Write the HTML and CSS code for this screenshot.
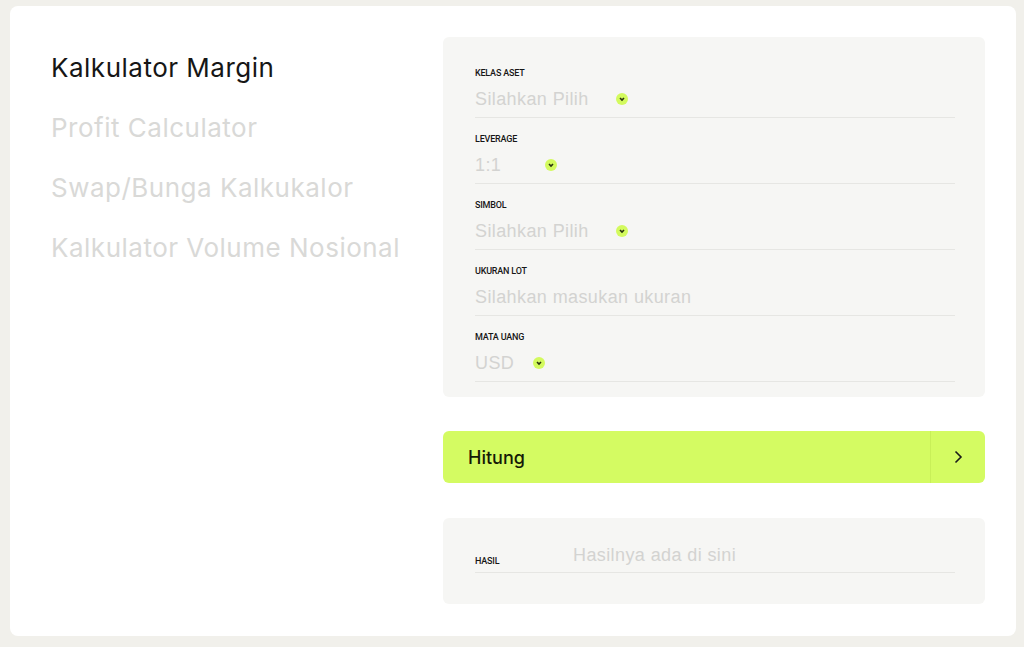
FILE: index.html
```html
<!DOCTYPE html>
<html lang="id">

<head>
    <meta charset="UTF-8">
    <meta name="viewport" content="width=device-width, initial-scale=1.0">
    <title>Kalkulator Margin</title>
    <link rel="stylesheet" href="styles.css">
</head>

<body>

    <div class="card">
        <ul class="calc-nav">
            <li class="active">Kalkulator Margin</li>
            <li>Profit Calculator</li>
            <li>Swap/Bunga Kalkukalor</li>
            <li>Kalkulator Volume Nosional</li>
        </ul>

        <div class="calc-main">
            <div class="form-box">
                <div class="field">
                    <div class="label">KELAS ASET</div>
                    <div class="value select">
                        <span class="val w-aset">Silahkan Pilih</span>
                        <span class="dot"><svg viewBox="0 0 12 12"><path d="M4 5l2 2 2-2" /></svg></span>
                    </div>
                </div>
                <div class="field">
                    <div class="label">LEVERAGE</div>
                    <div class="value select">
                        <span class="val w-lev">1:1</span>
                        <span class="dot"><svg viewBox="0 0 12 12"><path d="M4 5l2 2 2-2" /></svg></span>
                    </div>
                </div>
                <div class="field">
                    <div class="label">SIMBOL</div>
                    <div class="value select">
                        <span class="val w-aset">Silahkan Pilih</span>
                        <span class="dot"><svg viewBox="0 0 12 12"><path d="M4 5l2 2 2-2" /></svg></span>
                    </div>
                </div>
                <div class="field">
                    <div class="label">UKURAN LOT</div>
                    <div class="value">
                        <span class="val">Silahkan masukan ukuran</span>
                    </div>
                </div>
                <div class="field">
                    <div class="label">MATA UANG</div>
                    <div class="value select">
                        <span class="val w-cur">USD</span>
                        <span class="dot"><svg viewBox="0 0 12 12"><path d="M4 5l2 2 2-2" /></svg></span>
                    </div>
                </div>
            </div>

            <button class="btn-calc">
                <span class="btn-text">Hitung</span>
                <span class="btn-arrow"><svg viewBox="0 0 16 16"><path d="M5.5 2.5l5.5 5.5-5.5 5.5" /></svg></span>
            </button>

            <div class="result-box">
                <div class="result-row">
                    <div class="label">HASIL</div>
                    <div class="val">Hasilnya ada di sini</div>
                </div>
            </div>
        </div>
    </div>

</body>

</html>
```

FILE: styles.css
```css
* {
    margin: 0;
    padding: 0;
    list-style: none;
    box-sizing: border-box;
}

body {
    background: #f1f0eb;
    font-family: Inter, "Liberation Sans", sans-serif;
}

.card {
    margin: 6px 8px 0 10px;
    height: 630px;
    background: #fff;
    border-radius: 8px;
    padding: 31px 31px 32px 41px;
    display: flex;
}

.calc-nav {
    width: 392px;
    flex-shrink: 0;
    padding-top: 1px;
}

.calc-nav li {
    font-size: 26px;
    line-height: 60px;
    color: #d9d9d7;
    letter-spacing: 0.5px;
    white-space: nowrap;
}

.calc-nav li.active {
    color: #161616;
}

.calc-main {
    flex: 1;
}

.form-box {
    background: #f6f6f4;
    border-radius: 6px;
    padding: 30px 30px 15px 32px;
}

.field {
    border-bottom: 1px solid #e6e6e3;
    padding-bottom: 6px;
    margin-bottom: 15px;
}

.field:last-child {
    margin-bottom: 0;
}

.label {
    font-family: Roboto, "Liberation Sans", sans-serif;
    font-size: 9px;
    font-weight: 500;
    line-height: 12px;
    color: #161616;
    letter-spacing: -0.2px;
}

.value {
    margin-top: 8px;
    display: flex;
    align-items: center;
    height: 24px;
}

.val {
    font-family: "Liberation Sans", Arial, sans-serif;
    font-size: 18px;
    line-height: 24px;
    color: #d3d3d1;
    letter-spacing: 0.4px;
    white-space: nowrap;
}

.w-aset {
    width: 141px;
}

.w-lev {
    width: 70px;
}

.w-cur {
    width: 58px;
}

.dot {
    width: 12px;
    height: 12px;
    border-radius: 50%;
    background: #d3fa5e;
    display: flex;
}

.dot svg {
    width: 12px;
    height: 12px;
    fill: none;
    stroke: #2a3310;
    stroke-width: 1.6;
}

.btn-calc {
    margin-top: 34px;
    width: 100%;
    height: 52px;
    border: none;
    border-radius: 6px;
    background: #d4fb62;
    display: flex;
    align-items: stretch;
    cursor: pointer;
}

.btn-text {
    flex: 1;
    text-align: left;
    padding: 2px 0 0 25px;
    font-family: Inter, sans-serif;
    font-size: 18px;
    font-weight: 500;
    line-height: 50px;
    color: #141a06;
}

.btn-arrow {
    width: 55px;
    border-left: 1px solid #c8ef58;
    display: flex;
    align-items: center;
    justify-content: center;
}

.btn-arrow svg {
    width: 16px;
    height: 16px;
    fill: none;
    stroke: #1a1a1a;
    stroke-width: 1.6;
}

.result-box {
    margin-top: 35px;
    height: 86px;
    background: #f6f6f4;
    border-radius: 6px;
    padding: 25px 30px 0 32px;
}

.result-row {
    display: flex;
    align-items: flex-end;
    border-bottom: 1px solid #e6e6e3;
    padding-bottom: 5px;
}

.result-row .label {
    width: 98px;
}
```
